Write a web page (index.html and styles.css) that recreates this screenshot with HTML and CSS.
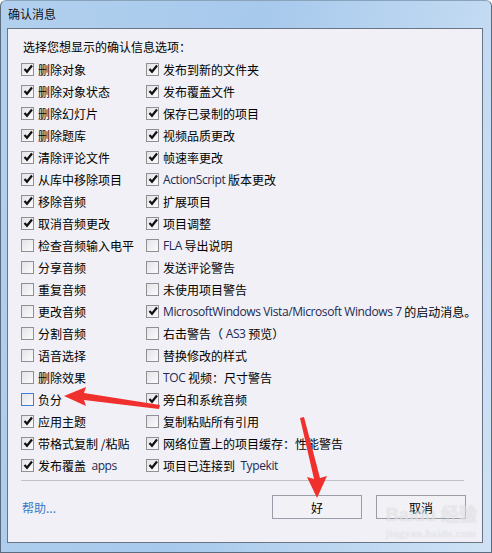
FILE: index.html
```html
<!DOCTYPE html>
<html lang="zh-CN">
<head>
    <meta charset="UTF-8">
    <title>确认消息</title>
    <link rel="stylesheet" href="styles.css">
</head>
<body>
    <div class="window">
        <div class="titlebar">确认消息</div>
        <div class="panel">
            <div class="intro">选择您想显示的确认信息选项：</div>

            <div class="options">
                <label class="opt on"><span class="box"></span>删除对象</label>
                <label class="opt on"><span class="box"></span>发布到新的文件夹</label>
                <label class="opt on"><span class="box"></span>删除对象状态</label>
                <label class="opt on"><span class="box"></span>发布覆盖文件</label>
                <label class="opt on"><span class="box"></span>删除幻灯片</label>
                <label class="opt on"><span class="box"></span>保存已录制的项目</label>
                <label class="opt on"><span class="box"></span>删除题库</label>
                <label class="opt on"><span class="box"></span>视频品质更改</label>
                <label class="opt on"><span class="box"></span>清除评论文件</label>
                <label class="opt on"><span class="box"></span>帧速率更改</label>
                <label class="opt on"><span class="box"></span>从库中移除项目</label>
                <label class="opt on"><span class="box"></span><span class="lat">ActionScript</span>&nbsp;版本更改</label>
                <label class="opt on"><span class="box"></span>移除音频</label>
                <label class="opt on"><span class="box"></span>扩展项目</label>
                <label class="opt on"><span class="box"></span>取消音频更改</label>
                <label class="opt on"><span class="box"></span>项目调整</label>
                <label class="opt"><span class="box"></span>检查音频输入电平</label>
                <label class="opt"><span class="box"></span><span class="lat">FLA</span>&nbsp;导出说明</label>
                <label class="opt"><span class="box"></span>分享音频</label>
                <label class="opt"><span class="box"></span>发送评论警告</label>
                <label class="opt"><span class="box"></span>重复音频</label>
                <label class="opt"><span class="box"></span>未使用项目警告</label>
                <label class="opt"><span class="box"></span>更改音频</label>
                <label class="opt on"><span class="box"></span><span class="lat">MicrosoftWindows Vista/Microsoft Windows 7</span>&nbsp;的启动消息。</label>
                <label class="opt"><span class="box"></span>分割音频</label>
                <label class="opt"><span class="box"></span>右击警告（&nbsp;<span class="lat">AS3</span>&nbsp;预览）</label>
                <label class="opt"><span class="box"></span>语音选择</label>
                <label class="opt"><span class="box"></span>替换修改的样式</label>
                <label class="opt"><span class="box"></span>删除效果</label>
                <label class="opt"><span class="box"></span><span class="lat">TOC</span>&nbsp;视频：尺寸警告</label>
                <label class="opt focus"><span class="box"></span>负分</label>
                <label class="opt on"><span class="box"></span>旁白和系统音频</label>
                <label class="opt on"><span class="box"></span>应用主题</label>
                <label class="opt"><span class="box"></span>复制粘贴所有引用</label>
                <label class="opt on"><span class="box"></span>带格式复制 /粘贴</label>
                <label class="opt on"><span class="box"></span>网络位置上的项目缓存：性能警告</label>
                <label class="opt on"><span class="box"></span>发布覆盖&nbsp;&nbsp;<span class="lat">apps</span></label>
                <label class="opt on"><span class="box"></span>项目已连接到&nbsp;&nbsp;<span class="lat">Typekit</span></label>
            </div>

            <div class="separator"></div>

            <div class="footer">
                <a class="help">帮助...</a>
                <div class="buttons">
                    <button class="btn">好</button>
                    <button class="btn">取消</button>
                </div>
            </div>
        </div>

        <div class="watermark">
            <span class="wm-logo">Bai<b>du</b> 经验</span>
            <span class="wm-url">jingyan.baidu.com</span>
        </div>

        <!-- annotation arrows drawn over the dialog -->
        <svg class="arrows" width="492" height="553" viewBox="0 0 492 553">
            <polygon points="64,396 86,387 84,393 160,405 159,409 84,400 86,406" fill="#f0302c"/>
            <polygon points="317,498 307,477 314,479 300,418 304,417 320,478 327,476" fill="#f0302c"/>
        </svg>
    </div>
</body>
</html>
```

FILE: styles.css
```css
:root {
    --panel-bg: #f0f0f6;
    --text-color: #000;
    --latin-color: #1c2a55;
    --link-color: #3c78c6;
}

html, body {
    margin: 0;
    padding: 0;
}

body {
    width: 492px;
    height: 553px;
    overflow: hidden;
    font-family: "Noto Sans CJK SC", "Noto Sans", sans-serif;
    font-size: 12px;
    color: var(--text-color);
}

.window {
    position: relative;
    width: 490px;
    height: 551px;
    border: 1px solid #5b6b80;
    border-top-color: #8aa3bd;
    border-radius: 6px 6px 0 0;
    background: linear-gradient(100deg, #b2d0ee 0%, #a7c9ec 45%, #cfe2f5 100%);
}

.titlebar {
    height: 27px;
    padding-left: 7px;
    line-height: 26px;
    font-size: 12px;
    color: #111;
}

.panel {
    margin-left: 6px;
    width: 476px;
    height: 515px;
    border: 1px solid #6a7482;
    background: var(--panel-bg);
    box-sizing: border-box;
    padding: 7px 0 0 13px;
}

.intro {
    height: 22px;
    line-height: 22px;
    padding-left: 2px;
}

.options {
    display: grid;
    grid-template-columns: 125px 1fr;
    grid-auto-rows: 22px;
}

.opt {
    display: flex;
    align-items: center;
    white-space: nowrap;
}

.box {
    flex: none;
    width: 13px;
    height: 13px;
    margin-right: 4px;
    box-sizing: border-box;
    border: 1px solid #8f8f94;
    background: linear-gradient(135deg, #e4e4e8, #fbfbfc);
    position: relative;
}

.opt.on .box::after {
    content: "";
    position: absolute;
    left: 1px;
    top: 0;
    width: 10px;
    height: 10px;
    background: url("data:image/svg+xml;utf8,<svg xmlns='http://www.w3.org/2000/svg' width='10' height='10'><path d='M1.5 5 L4 7.8 L9 1.5' fill='none' stroke='%23111' stroke-width='2.2'/></svg>") no-repeat;
}

.opt.focus .box {
    border-color: #3c7fd6;
}

.lat {
    font-family: "Open Sans", "Noto Sans", sans-serif;
    font-size: 12px;
    letter-spacing: -0.4px;
    color: var(--latin-color);
}

.separator {
    width: 443px;
    height: 1px;
    margin-top: 4px;
    background: #c2c2ca;
}

.footer {
    display: flex;
    align-items: center;
    justify-content: space-between;
    margin-top: 14px;
    width: 445px;
}

.help {
    color: var(--link-color);
    padding-left: 1px;
}

.buttons {
    display: flex;
    gap: 14px;
}

.btn {
    width: 90px;
    height: 24px;
    font-family: inherit;
    font-size: 12px;
    color: #000;
    border: 1px solid #9a9ca8;
    background: #f2f2f6;
    padding: 0;
}

.watermark {
    position: absolute;
    left: 385px;
    top: 505px;
    color: rgba(255, 255, 255, 0.5);
    text-shadow: 0 0 1px rgba(120, 120, 130, 0.3);
    line-height: 1;
    pointer-events: none;
}

.wm-logo {
    display: block;
    font-family: "Liberation Sans", sans-serif;
    font-size: 18px;
    font-weight: bold;
}

.wm-url {
    display: block;
    margin-top: 4px;
    font-family: "Liberation Serif", serif;
    font-size: 11px;
    letter-spacing: 0.5px;
}

.arrows {
    position: absolute;
    left: -1px;
    top: -1px;
    pointer-events: none;
}
```
